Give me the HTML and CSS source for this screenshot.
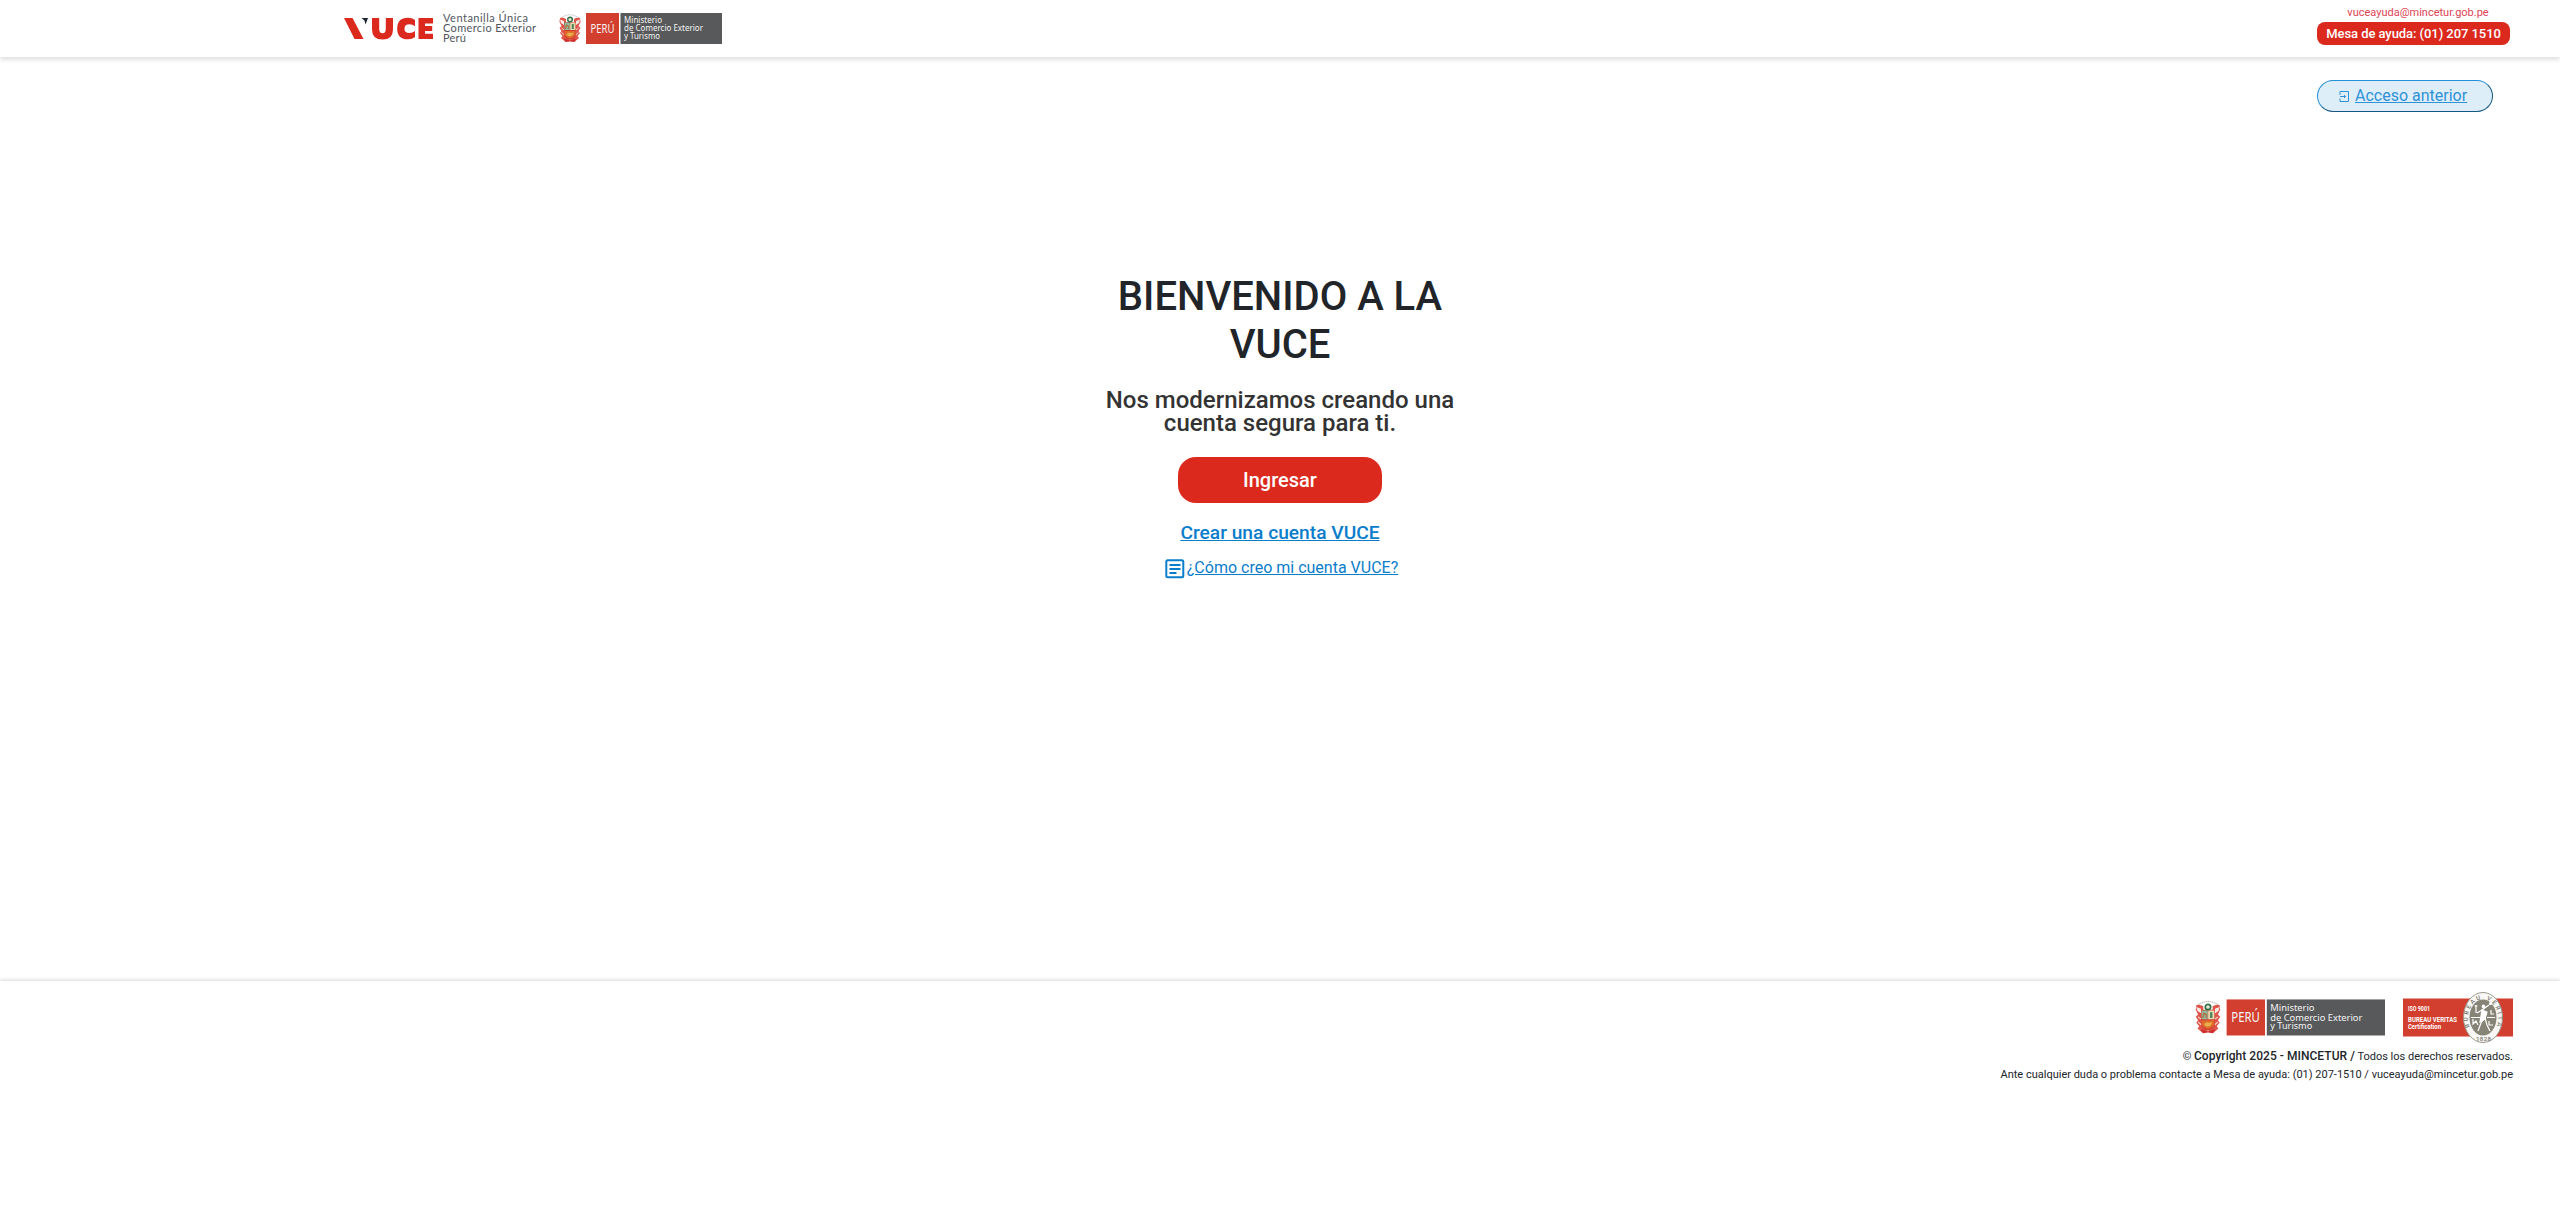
FILE: index.html
```html
<!DOCTYPE html>
<html lang="es">
<head>
<meta charset="utf-8">
<title>VUCE - Ventanilla Única de Comercio Exterior</title>
<link rel="stylesheet" href="styles.css">
</head>
<body>
<svg class="sprite" aria-hidden="true">
  <symbol id="escudo" viewBox="0 0 164 32">
    <path d="M2.500 5.500Q12-2 21.500 5.500" fill="none" stroke="#c2bebb" stroke-width="1" stroke-dasharray="1.200 .5"/>
    <path d="M2 5Q5 4 8 6V22L12 28L7 28.500L3 25L4.500 23L2 20L3.500 18L1.500 15L3.500 13L1.500 9ZM22 5Q19 4 16 6V22L12 28L17 28.500L21 25L19.500 23L22 20L20.500 18L22.500 15L20.500 13L22.500 9Z" fill="#e0544a"/>
    <path d="M2 6.500L6 8V12L3 10ZM22 6.500L18 8V12L21 10Z" fill="#f9ebe6"/>
    <path d="M3.500 15L6 17M3.500 19.500L6.500 22M20.500 15L18 17M20.500 19.500L17.500 22" stroke="#f8dcd6" stroke-width="1"/>
    <path d="M6 9H18V21Q18 25 12 27Q6 25 6 21Z" fill="#d0402d"/>
    <path d="M6.500 9.500H11.800V17H6.500Z" fill="#8fbb9f"/>
    <path d="M12.200 9.500H17.500V17H12.200Z" fill="#e8dcb9"/>
    <path d="M7.500 16L8.500 12L10.500 13V16" fill="none" stroke="#ae7043" stroke-width="1.200"/>
    <path d="M14.800 11V16" stroke="#4d8050" stroke-width="2"/>
    <path d="M6.500 18H17.500V21Q17 24 12 25.500Q7 24 6.500 21Z" fill="#df682d"/>
    <path d="M8.500 22Q9.500 18.500 13.500 20L15.500 19.500Q15.500 23 11.500 23.500Z" fill="#e7b04b"/>
    <circle cx="12" cy="6.500" r="2.300" fill="#e4e9dc" stroke="#36734a" stroke-width="1.500"/>
    <path d="M6 25.500L12 27.500L18 25.500L16.500 29L12 28.500L7.500 29Z" fill="#cf2d2b"/>
    <path d="M28 0H61V31H28Z" fill="#d33f2f"/>
    <path d="M62.500 0H164V31H62.500Z" fill="#58595b"/>
  </symbol>
</svg>

<header class="header">
  <div class="brands">
    <svg class="vuce" viewBox="0 0 192 34" role="img" aria-label="VUCE">
      <path d="M0 6H8.500L19.500 27H10.500Z" fill="#dc291e"/>
      <path d="M17.500 6H24L21.500 12.500L20.500 8.500Z" fill="#1b2430"/>
      <path d="M28 6H35.200V17Q35.200 21.200 38.500 21.200Q41.800 21.200 41.800 17V6H49V17.500Q49 27.500 38.500 27.500Q28 27.500 28 17.500Z" fill="#dc291e"/>
      <path d="M71 8V14.300Q68.500 12.300 65.500 12.300Q60.500 12.300 60.500 16.700Q60.500 21 65.500 21Q68.500 21 71 19V25.300Q68 27.300 64 27.300Q53.200 27.300 53.200 16.700Q53.200 5.800 64 5.800Q68 5.800 71 8Z" fill="#dc291e"/>
      <path d="M74.500 6H89V11.400H81V14H88.200V19H81V21.700H89V27H74.500Z" fill="#dc291e"/>
      <g class="vuce-type">
        <text x="99" y="10.200" textLength="85">Ventanilla Única</text>
        <text x="99" y="20.200" textLength="93">Comercio Exterior</text>
        <text x="99" y="30.200" textLength="23">Perú</text>
      </g>
    </svg>
    <svg class="ministry" viewBox="0 0 164 32" role="img" aria-label="Ministerio de Comercio Exterior y Turismo">
      <use href="#escudo" width="164" height="32"/>
      <g class="ministry-type">
        <text class="country" x="32.500" y="19.500" textLength="24" lengthAdjust="spacingAndGlyphs">PERÚ</text>
        <text x="66" y="10.400" textLength="38" lengthAdjust="spacingAndGlyphs">Ministerio</text>
        <text x="66" y="18.200" textLength="79" lengthAdjust="spacingAndGlyphs">de Comercio Exterior</text>
        <text x="66" y="25.800" textLength="36" lengthAdjust="spacingAndGlyphs">y Turismo</text>
      </g>
    </svg>
  </div>
  <div class="help">
    <a class="help-mail">vuceayuda@mincetur.gob.pe</a>
    <span class="help-phone">Mesa de ayuda: (01) 207 1510</span>
  </div>
</header>

<main class="main">
  <div class="access-row">
    <button class="access">
      <svg class="access-icon" viewBox="0 0 10 12"><path d="M1 4V.5H9.500V10.500H1V7.500M1 5.500H6.500M5 4L6.500 5.500L5 7" fill="none" stroke="currentColor"/></svg>
      <span class="access-label">Acceso anterior</span>
    </button>
  </div>
  <section class="welcome">
    <h1 class="title">BIENVENIDO A LA<br>VUCE</h1>
    <h2 class="subtitle">Nos modernizamos creando una<br>cuenta segura para ti.</h2>
    <button class="enter">Ingresar</button>
    <a class="create">Crear una cuenta VUCE</a>
    <div class="guide">
      <svg class="guide-icon" viewBox="0 0 20 20"><rect x="1.300" y="1.300" width="17" height="17" rx="1.500" fill="none" stroke="currentColor" stroke-width="2"/><path d="M4.500 6H15.500M4.500 10H15.500M4.500 14H11.500" stroke="currentColor" stroke-width="1.800"/></svg>
      <a class="guide-link">¿Cómo creo mi cuenta VUCE?</a>
    </div>
  </section>
</main>

<footer class="footer">
  <div class="seals">
    <svg class="ministry-large" viewBox="0 0 164 32" role="img" aria-label="Ministerio de Comercio Exterior y Turismo">
      <use href="#escudo" width="164" height="32"/>
      <g class="ministry-type">
        <text class="country" x="32" y="19.500" textLength="24.500" lengthAdjust="spacingAndGlyphs">PERÚ</text>
        <text x="65.500" y="10.400" textLength="38" lengthAdjust="spacingAndGlyphs">Ministerio</text>
        <text x="65.500" y="18.200" textLength="79" lengthAdjust="spacingAndGlyphs">de Comercio Exterior</text>
        <text x="65.500" y="25.800" textLength="36" lengthAdjust="spacingAndGlyphs">y Turismo</text>
      </g>
    </svg>
    <svg class="bureau" viewBox="0 0 110 52" role="img" aria-label="Bureau Veritas Certification">
      <defs><path id="seal-arc" d="M66.500 35A15 19.500 0 1 1 93.500 35"/></defs>
      <path d="M0 6.500H110V44.500H0Z" fill="#d33f2f"/>
      <g class="iso-type">
        <text x="5" y="18.500" textLength="22" lengthAdjust="spacingAndGlyphs">ISO 9001</text>
        <text x="5" y="30" textLength="49" lengthAdjust="spacingAndGlyphs">BUREAU VERITAS</text>
        <text x="5" y="37.200" textLength="33" lengthAdjust="spacingAndGlyphs">Certification</text>
      </g>
      <ellipse cx="80" cy="25.500" rx="19.500" ry="25" fill="#f8f7f4" stroke="#9a988e"/>
      <ellipse cx="80" cy="25.500" rx="13.500" ry="18" fill="#858476"/>
      <text class="seal-type"><textPath href="#seal-arc" textLength="76">BUREAU VERITAS</textPath></text>
      <text class="seal-type" x="73" y="49" textLength="15">1828</text>
      <g fill="none" stroke="#fff" stroke-width="1.200">
        <path d="M73 13V21M71.500 14H74.500M74 21L79 18L86 13M80 18L82 25L78 31L75 39M82 26L84 33L87 39"/>
        <path d="M79 18L84 20L82 27L77 30Z" fill="#fff"/>
        <circle cx="80.500" cy="14.500" r="1.300" fill="#fff"/>
        <circle cx="87.500" cy="11.500" r="1" fill="#fff"/>
        <path d="M68 25.500H77M84 25.500H92M70 27V32L73 29L75 33M86 29V33H90M88 18V22H91"/>
      </g>
    </svg>
  </div>
  <p class="copyright">© <strong>Copyright 2025 - MINCETUR /</strong> Todos los derechos reservados.</p>
  <p class="contact">Ante cualquier duda o problema contacte a Mesa de ayuda: (01) 207-1510 / vuceayuda@mincetur.gob.pe</p>
</footer>
</body>
</html>
```
FILE: styles.css
```css
* { box-sizing: border-box; }
body { margin: 0; background: #fff; color: #212529; font-family: Roboto, "Liberation Sans", sans-serif; }
button { font-family: inherit; padding: 0; }
.sprite { display: block; width: 0; height: 0; }
.header { display: flex; justify-content: space-between; height: 57px; padding: 0 50px 0 344px; box-shadow: 0 3px 4px #e2e2e2; }
.brands { display: flex; gap: 22px; padding-top: 12px; }
.vuce { width: 192px; height: 34px; overflow: visible; }
.vuce-type { font: 400 11px Lato, sans-serif; fill: #50555d; }
.ministry { width: 164px; height: 32px; margin-top: 1px; }
.ministry-type { font: 8.300px "Noto Sans", "Open Sans", sans-serif; fill: #f4f4f4; }
.country { font-size: 11.800px; }
.help { display: flex; flex-direction: column; align-items: center; width: 193px; padding-top: 5px; }
.help-mail { height: 17px; padding-left: 9px; font-size: 11px; line-height: 16px; color: #dc4552; }
.help-phone { width: 193px; height: 23px; border-radius: 8px; background: #dc291e; color: #fff; font-size: 13px; font-weight: 500; letter-spacing: -.06px; line-height: 23px; text-align: center; }
.main { height: 924px; padding-top: 23px; }
.access-row { display: flex; justify-content: flex-end; height: 32px; padding-right: 67px; }
.access { display: flex; align-items: center; gap: 6px; width: 176px; height: 32px; padding-left: 21px; border: 1px outset #268fd9; border-radius: 16px; background: #deeef9; color: #3091d7; }
.access-icon { width: 10px; height: 12px; margin-top: 1px; }
.access-label { font-size: 16px; line-height: 20px; text-decoration: underline; }
.welcome { display: flex; flex-direction: column; align-items: center; padding-top: 161px; text-align: center; }
.title { margin: 0; font-size: 40px; font-weight: 500; line-height: 48px; }
.subtitle { margin: 20px 0 0; color: #333; font-size: 24px; font-weight: 500; line-height: 23px; }
.enter { width: 204px; height: 46px; margin-top: 22px; border: 0; border-radius: 18px; background: #dc291e; color: #fff; font-size: 20px; font-weight: 500; }
.create { margin-top: 18px; color: #0a7dcb; font-size: 19.200px; font-weight: 500; line-height: 24px; text-decoration: underline; }
.guide { display: flex; gap: 2px; margin-top: 13px; margin-left: 3px; color: #0a7dcb; }
.guide-icon { width: 20px; height: 20px; margin-top: 1px; }
.guide-link { font-size: 16px; line-height: 20px; text-decoration: underline; }
.footer { display: flex; flex-direction: column; align-items: flex-end; padding: 11px 47px 0 0; box-shadow: 0 -1px 4px #d6d6d6; height: 250px; background: #fff; }
.seals { display: flex; align-items: flex-start; gap: 18px; height: 52px; }
.ministry-large { width: 191px; height: 38px; margin-top: 7px; }
.bureau { width: 110px; height: 52px; }
.iso-type { font: 700 7px Roboto, sans-serif; fill: #fff; }
.seal-type { font: 500 6px Roboto, sans-serif; fill: #77766c; }
.copyright { margin: 3px 0 0; font-size: 11px; line-height: 18px; }
.copyright strong { font-size: 12px; font-weight: 500; letter-spacing: .04px; }
.contact { margin: 0; font-size: 11px; line-height: 18px; }
```
